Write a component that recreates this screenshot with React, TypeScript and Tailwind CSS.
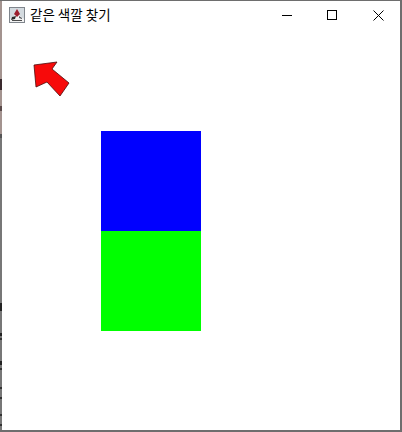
import React from 'react';

// left window edge, the desktop behind shows through it: [height, colour]
const edge: [number, string][] = [
  [78, '#a3938f'], [11, '#3a2a2e'], [16, '#a3938f'], [5, '#5a4a4a'], [23, '#a3938f'], [4, '#555555'],
  [165, '#777777'], [8, '#222222'], [22, '#777777'], [3, '#222222'], [2, '#777777'], [2, '#333333'],
  [21, '#777777'], [4, '#222222'], [3, '#777777'], [2, '#333333'], [17, '#777777'], [2, '#333333'],
  [8, '#777777'], [2, '#333333'], [15, '#777777'], [2, '#333333'], [8, '#777777'], [2, '#333333'], [4, '#777777'],
];

const AppIcon = () => (
  <svg width="16" height="16" viewBox="0 0 16 16" className="shrink-0">
    <rect x="0.5" y="0.5" width="15" height="15" fill="#d3dadf" stroke="#7f858c" />
    <path d="M1 12 L6 8 L10 8 L15 12 L15 15 L1 15 Z" fill="#f2f2f2" />
    <path d="M8 2 L11 7 L8 10 L5 7 Z" fill="#9c1f2e" />
    <path d="M3 10 L7 9 L6 12 L2 13 Z" fill="#2b2b2b" />
    <path d="M10 9 L13 11 L13 12 L10 11 Z" fill="#55595e" />
    <rect x="3" y="13" width="10" height="1" fill="#4d4d4d" />
  </svg>
);

const App: React.FC = () => {
  return (
    <div className="w-[402px] h-[432px] flex bg-white border-t border-r-2 border-b-2 border-[#6e6e6e] overflow-hidden">
      <div className="w-[2px] shrink-0 flex flex-col">
        {edge.map(([h, c], i) => (
          <div key={i} className="shrink-0" style={{ height: h, backgroundColor: c }} />
        ))}
      </div>

      <div className="flex-1 flex flex-col min-w-0">
        {/* Title bar */}
        <div className="h-[30px] flex items-center shrink-0 pb-[2px]">
          <div className="ml-[7px] mr-[5px]">
            <AppIcon />
          </div>
          <span
            className="text-[13.5px] text-black leading-none"
            style={{ fontFamily: "'Noto Sans CJK KR', 'Noto Sans', sans-serif" }}
          >
            같은 색깔 찾기
          </span>
          <div className="ml-auto -mr-[1px] flex items-center text-black">
            <div className="w-[46px] flex items-center justify-center pl-[2px]">
              <svg width="10" height="10" viewBox="0 0 10 10">
                <path d="M0 5.5 H10" stroke="#000" strokeWidth="1" />
              </svg>
            </div>
            <div className="w-[46px] flex items-center justify-center">
              <svg width="10" height="10" viewBox="0 0 10 10">
                <rect x="0.5" y="0.5" width="9" height="9" fill="none" stroke="#000" strokeWidth="1" />
              </svg>
            </div>
            <div className="w-[46px] flex items-center justify-center pt-[1px]">
              <svg width="11" height="11" viewBox="0 0 11 11">
                <path d="M0.5 0.5 L10.5 10.5 M10.5 0.5 L0.5 10.5" stroke="#000" strokeWidth="1" />
              </svg>
            </div>
          </div>
        </div>

        {/* Content */}
        <div className="flex-1 flex flex-col">
          <svg width="38" height="36" viewBox="0 0 38 36" className="ml-[31px] mt-[30px] block">
            <path
              d="M1 4 L24 1 L19 8 L36 22 L27 35 L14 21 L3 26 Z"
              fill="#f70a0a"
              stroke="#4a0c0c"
              strokeWidth="0.8"
            />
          </svg>
          <div className="ml-[99px] mt-[34px] w-[100px] flex flex-col">
            <div className="h-[100px] bg-[#0000ff]" />
            <div className="h-[100px] bg-[#00ff00]" />
          </div>
        </div>
      </div>
    </div>
  );
};

export default App;
